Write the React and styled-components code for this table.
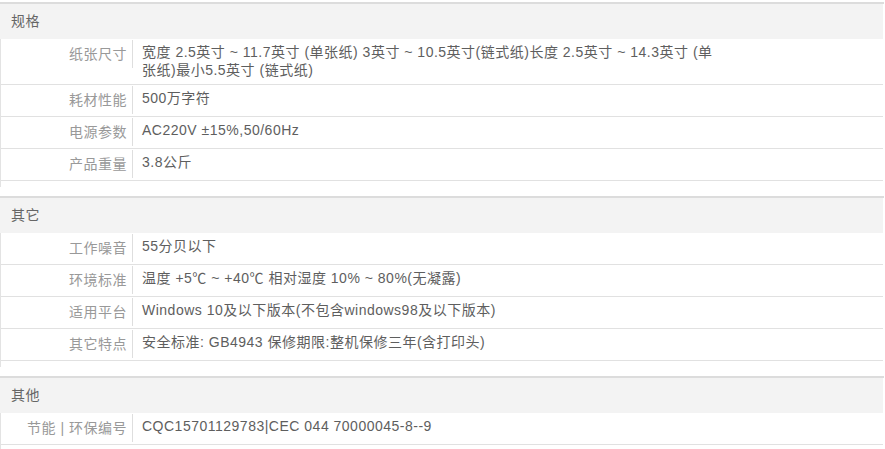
import React from "react";
import styled, { createGlobalStyle } from "styled-components";

const GlobalStyle = createGlobalStyle`
  html, body {
    margin: 0;
    padding: 0;
    background: #fff;
  }
  body {
    font-family: "Liberation Sans", Arial, "Noto Sans CJK SC", sans-serif;
    font-size: 14px;
    letter-spacing: 0.5px;
  }
`;

const specs = [
  {
    title: "规格",
    rows: [
      {
        label: "纸张尺寸",
        value:
          "宽度 2.5英寸 ~ 11.7英寸 (单张纸) 3英寸 ~ 10.5英寸(链式纸)长度 2.5英寸 ~ 14.3英寸 (单张纸)最小5.5英寸 (链式纸)",
      },
      { label: "耗材性能", value: "500万字符" },
      { label: "电源参数", value: "AC220V ±15%,50/60Hz" },
      { label: "产品重量", value: "3.8公斤" },
    ],
  },
  {
    title: "其它",
    rows: [
      { label: "工作噪音", value: "55分贝以下" },
      { label: "环境标准", value: "温度 +5℃ ~ +40℃ 相对湿度 10% ~ 80%(无凝露)" },
      { label: "适用平台", value: "Windows 10及以下版本(不包含windows98及以下版本)" },
      { label: "其它特点", value: "安全标准: GB4943 保修期限:整机保修三年(含打印头)" },
    ],
  },
  {
    title: "其他",
    rows: [{ label: "节能 | 环保编号", value: "CQC15701129783|CEC 044 70000045-8--9" }],
  },
];

function App() {
  return (
    <>
      <GlobalStyle />
      <Wrap>
        {specs.map((group) => (
          <Group key={group.title}>
            <GroupTitle>{group.title}</GroupTitle>
            <GroupBody>
              {group.rows.map((row) => (
                <Row key={row.label}>
                  <Label>{row.label}</Label>
                  <Value>{row.value}</Value>
                </Row>
              ))}
            </GroupBody>
          </Group>
        ))}
      </Wrap>
    </>
  );
}

export default App;

const Wrap = styled.div`
  width: 884px;
  padding-top: 2px;
`;

const Group = styled.section`
  border-top: 2px solid #dcdcdc;
  margin-bottom: 9px;
`;

const GroupTitle = styled.div`
  height: 35px;
  line-height: 34px;
  padding-left: 11px;
  margin-right: 1px;
  background: #f3f3f3;
  color: #666;
`;

const GroupBody = styled.div`
  border-left: 1px solid #e3e3e3;
  padding-bottom: 6px;
  margin-right: 1px;
`;

const Row = styled.div`
  display: flex;
  align-items: flex-start;
  padding: 1px 0 2px;
  border-bottom: 1px solid #e1e1e1;
`;

const Label = styled.div`
  flex-shrink: 0;
  box-sizing: border-box;
  width: 132px;
  height: 28px;
  line-height: 28px;
  padding-right: 5px;
  text-align: right;
  color: #999;
  border-right: 1px solid #dedede;
  white-space: nowrap;
`;

const Value = styled.div`
  max-width: 578px;
  padding: 3px 0 3px 9px;
  line-height: 18px;
  color: #5e5e5e;
`;
